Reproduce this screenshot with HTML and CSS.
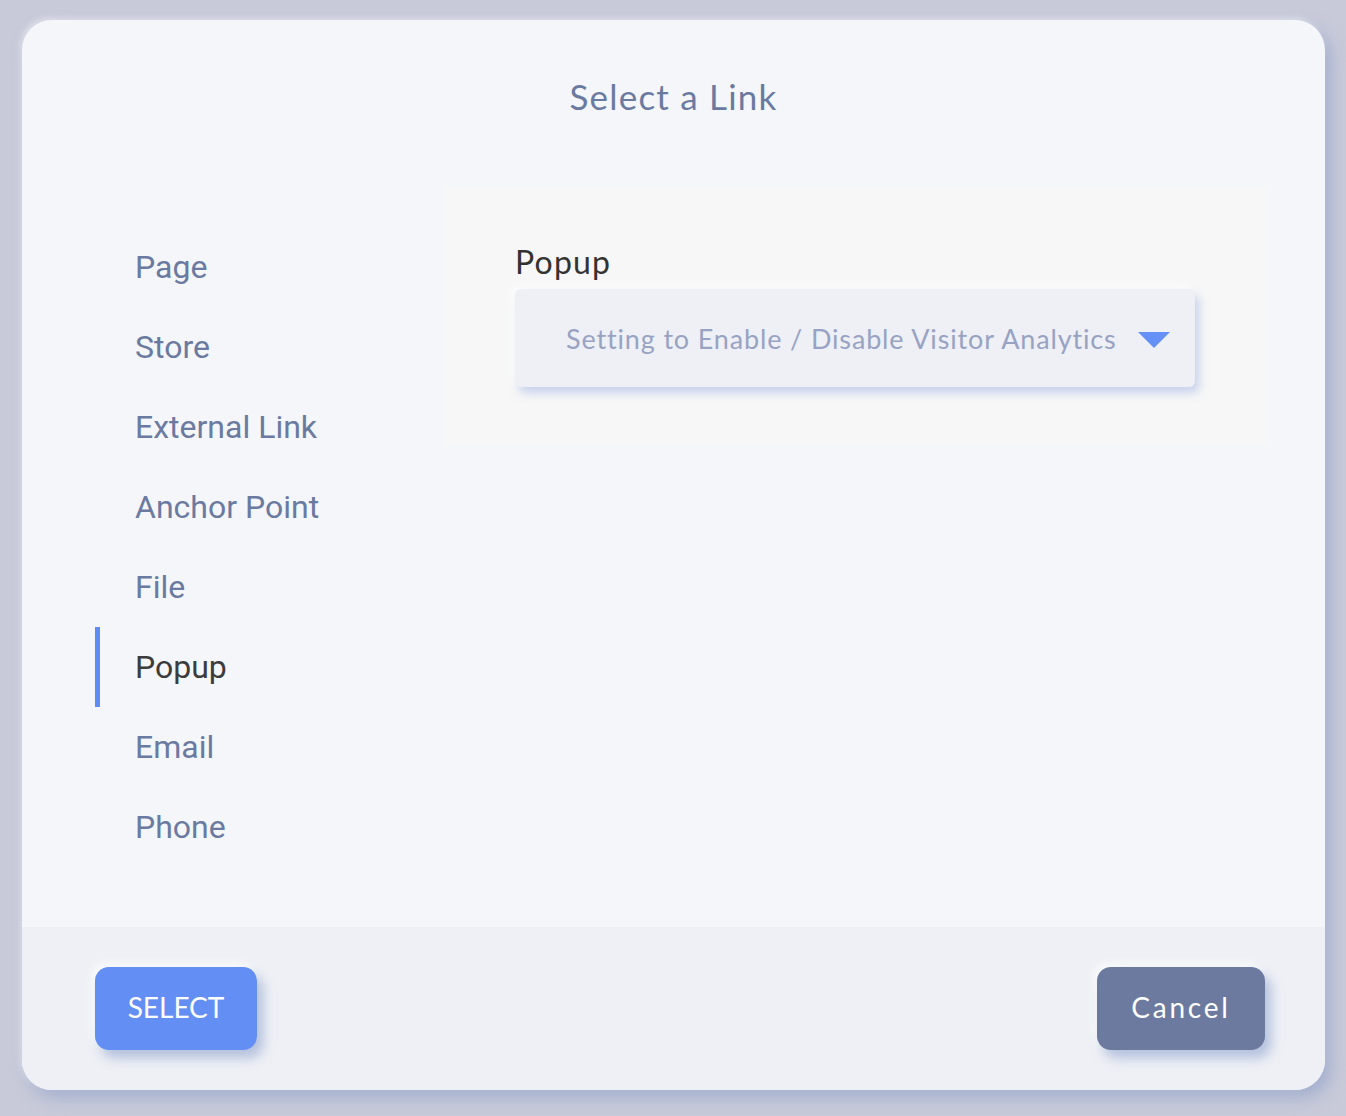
FILE: index.html
```html
<!DOCTYPE html>
<html lang="en">
<head>
    <meta charset="UTF-8">
    <title>Select a Link</title>
    <link rel="stylesheet" href="styles.css">
</head>
<body>
<div class="modal">
    <div class="modal-body">
        <h2 class="title">Select a Link</h2>
        <div class="main">
            <ul class="menu">
                <li>Page</li>
                <li>Store</li>
                <li>External Link</li>
                <li>Anchor Point</li>
                <li>File</li>
                <li class="current">Popup</li>
                <li>Email</li>
                <li>Phone</li>
            </ul>
            <div class="panel">
                <div class="label">Popup</div>
                <div class="select">
                    <span>Setting to Enable / Disable Visitor Analytics</span>
                    <i class="caret"></i>
                </div>
            </div>
        </div>
    </div>
    <div class="modal-foot">
        <button class="btn btn-select">SELECT</button>
        <button class="btn btn-cancel">Cancel</button>
    </div>
</div>
</body>
</html>
```

FILE: styles.css
```css
* {
    padding: 0;
    margin: 0;
    list-style: none;
    border: 0;
    box-sizing: border-box;
}

body {
    background: #c8cad9;
    height: 1116px;
    padding: 20px 21px 0 22px;
    font-family: "Inter", "Lato", sans-serif;
}

.modal {
    width: 1303px;
    height: 1070px;
    background: #f4f6fa;
    border-radius: 30px;
    overflow: hidden;
    display: flex;
    flex-direction: column;
    box-shadow: 6px 8px 16px rgba(140, 158, 200, 0.6), -2px -2px 6px rgba(255, 255, 255, 0.5);
}

.modal-body {
    height: 907px;
    padding-top: 56px;
}

.title {
    text-align: center;
    font-family: "Lato", sans-serif;
    font-weight: 400;
    font-size: 35px;
    line-height: 40px;
    color: #6b7aa1;
    letter-spacing: 1.2px;
}

.main {
    display: flex;
    margin-top: 71px;
}

.menu {
    width: 350px;
    padding-left: 73px;
    padding-top: 40px;
}

.menu li {
    height: 80px;
    line-height: 80px;
    padding-left: 35px;
    font-family: "Roboto", sans-serif;
    font-size: 32px;
    color: #6b7aa0;
    border-left: 5px solid transparent;
    cursor: pointer;
}

.menu li.current {
    color: #3c3c3c;
    border-left-color: #5f8bf4;
}

.panel {
    margin-left: 73px;
    width: 820px;
    height: 258px;
    background: #f7f7f7;
    padding: 52px 70px 0;
}

.label {
    font-family: "Lato", sans-serif;
    font-size: 32px;
    line-height: 46px;
    letter-spacing: 1.2px;
    color: #333;
}

.select {
    width: 680px;
    height: 98px;
    margin-top: 4px;
    background: #eef0f6;
    border-radius: 6px;
    display: flex;
    align-items: center;
    padding: 0 25px 0 51px;
    box-shadow: 4px 6px 10px rgba(160, 180, 225, 0.55), -3px -3px 8px rgba(255, 255, 255, 0.9);
}

.select span {
    flex: 1;
    font-family: "Lato", sans-serif;
    font-size: 27px;
    letter-spacing: 0.85px;
    color: #98a3c4;
}

.caret {
    width: 0;
    height: 0;
    border-left: 16px solid transparent;
    border-right: 16px solid transparent;
    border-top: 16px solid #6590f5;
    margin-top: 4px;
}

.modal-foot {
    flex: 1;
    background: #eef0f5;
    display: flex;
    justify-content: space-between;
    align-items: flex-start;
    padding: 40px 60px 0 73px;
}

.btn {
    height: 83px;
    border-radius: 14px;
    color: #fff;
    font-family: "Lato", sans-serif;
    font-size: 28px;
    line-height: 76px;
    padding-bottom: 4px;
    cursor: pointer;
    box-shadow: 6px 8px 12px rgba(140, 160, 205, 0.6), -3px -3px 8px rgba(255, 255, 255, 0.9);
}

.btn-select {
    width: 162px;
    background: #638ef3;
}

.btn-cancel {
    width: 168px;
    background: #6c7a9f;
    letter-spacing: 2.8px;
}
```
